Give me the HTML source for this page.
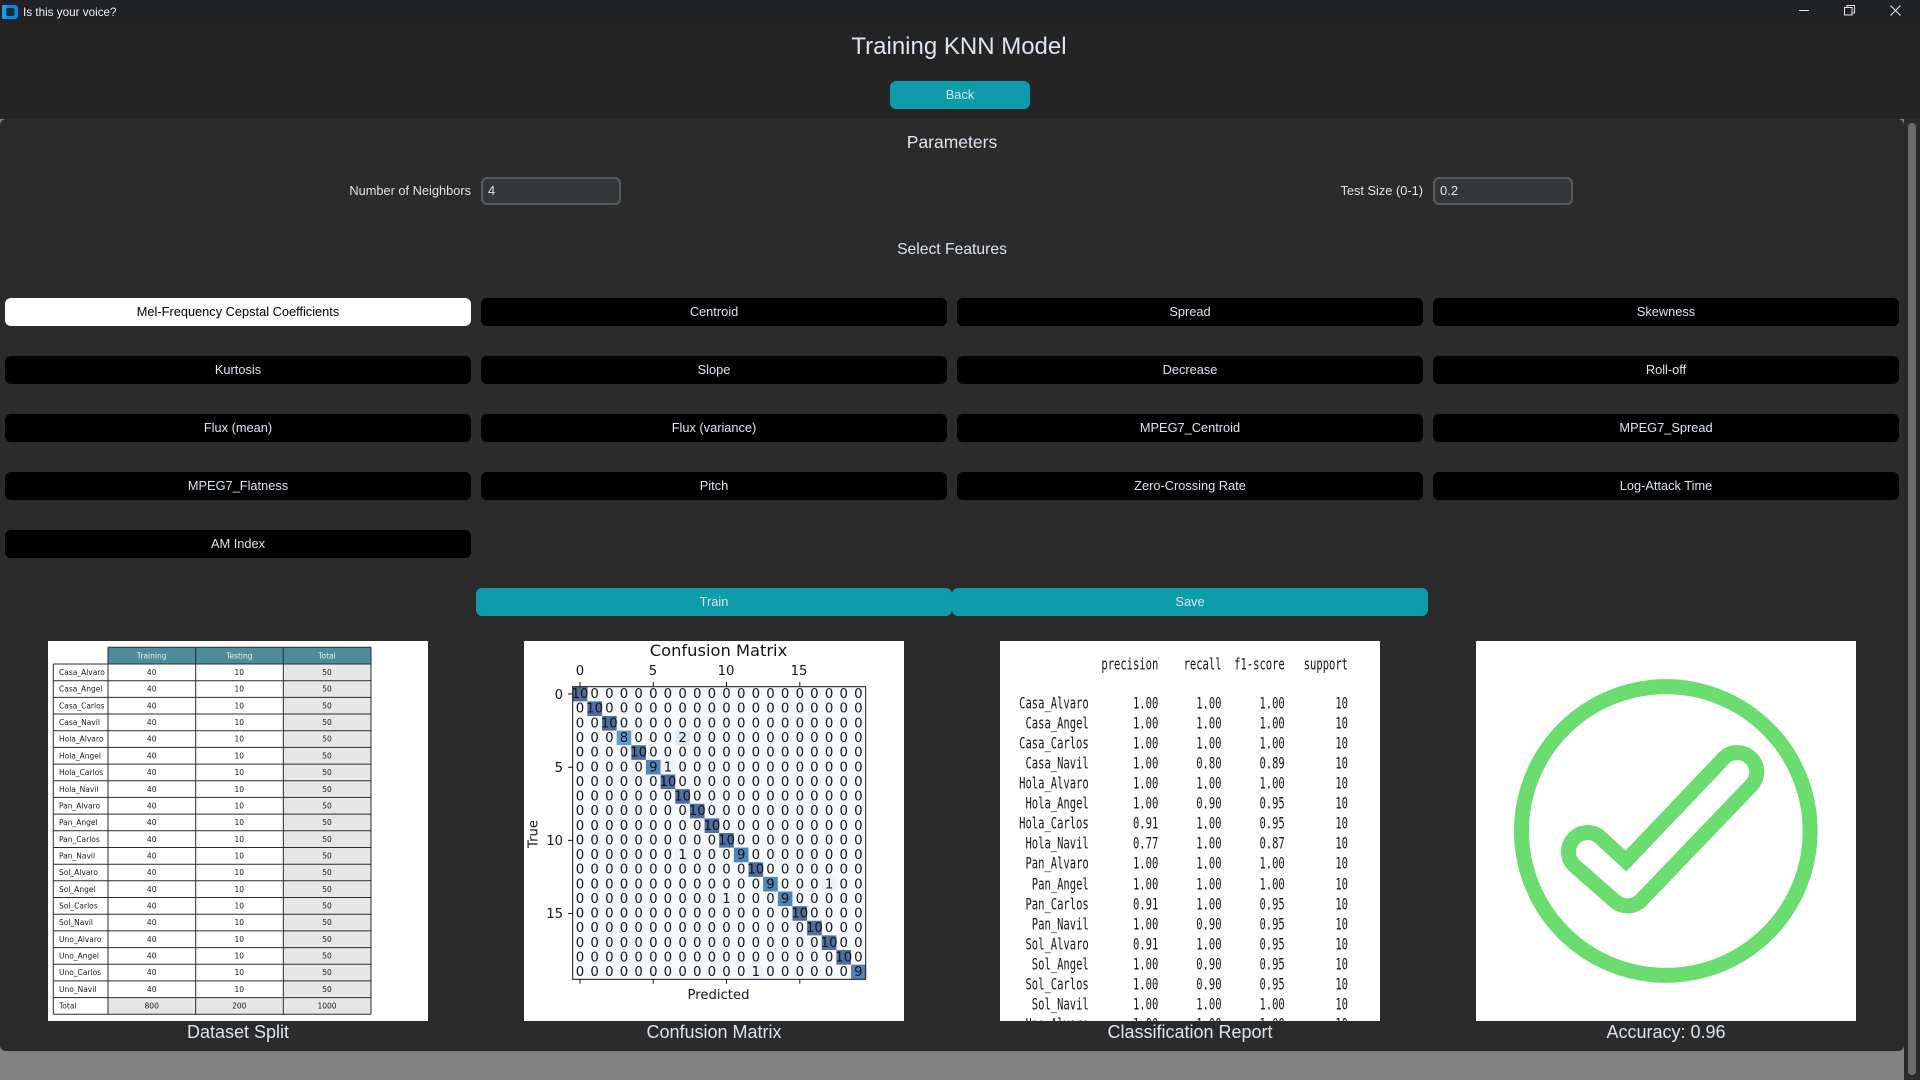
<!DOCTYPE html>
<html><head><meta charset="utf-8"><title>Is this your voice?</title>
<style>
html,body{margin:0;padding:0;width:1920px;height:1080px;overflow:hidden;background:#242424;font-family:"Liberation Sans",Arial,sans-serif;color:#dce4ee}
div{position:absolute;box-sizing:border-box}
.t{white-space:nowrap;text-align:center;line-height:1}
.b{height:28px;width:466px;border-radius:6px;background:#000;color:#dce4ee;font-size:12.8px;display:flex;align-items:center;justify-content:center;white-space:nowrap;padding-bottom:2px}
.a{background:#0e9baa;border-radius:6px;height:28px;font-size:12.8px;display:flex;align-items:center;justify-content:center;color:#dce4ee;padding-bottom:1px}
.i{width:140px;height:28px;background:#343638;border:2px solid #565b5e;border-radius:6px;font-size:13px;line-height:24px;padding-left:5px}
.c{font-size:18px;width:380px;text-align:center;top:1022px;line-height:20px;white-space:nowrap}
svg{position:absolute;left:0;top:0}
.tb text{font-family:"DejaVu Sans",sans-serif;font-size:7.5px;fill:#1a1a1a;text-anchor:middle}
.tb text.l{text-anchor:start}
.tb text.h{fill:#e4eef0}
.cm text{font-family:"DejaVu Sans",sans-serif;font-size:13.3px;fill:#141414;text-anchor:middle}
.cm .n{font-size:13.2px}
.rp text{font-family:"DejaVu Sans Mono",monospace;font-size:15.8px;fill:#161616;text-anchor:end}
</style></head>
<body>
<div style="left:0;top:0;width:1920px;height:23px;background:#202225"></div>
<svg width="1920" height="24" style="z-index:2">
<rect x="2" y="5" width="16" height="14" rx="3" fill="#0a84e6"/>
<rect x="2" y="5" width="5" height="14" rx="2" fill="#0fa0f5"/>
<rect x="6" y="8" width="8.5" height="8" rx="2" fill="#1c2a38"/>
<path d="M1799 10.5h10" stroke="#e8e8e8" stroke-width="1" fill="none"/>
<path d="M1844.5 7.5h7.500v7.500h-7.500zM1847 7.500v-2h7.500v7.500h-2.500" stroke="#e8e8e8" stroke-width="1" fill="none"/>
<path d="M1890.500 5.500l10 10M1900.500 5.500l-10 10" stroke="#e8e8e8" stroke-width="1.100" fill="none"/>
</svg>
<div class="t" style="left:23px;top:6.500px;font-size:11.700px;color:#f0f0f0;z-index:2">Is this your voice?</div>

<div class="t" style="left:760px;top:34.500px;width:398px;font-size:24px">Training KNN Model</div>
<div class="a" style="left:890px;top:81px;width:140px">Back</div>

<div style="left:0;top:119px;width:1920px;height:961px;background:#2b2b2b"></div>
<div style="left:0;top:119px;width:1904px;height:961px;background:#828282"></div>
<div style="left:0;top:119px;width:1904px;height:932px;background:#2b2b2b;border-radius:6px"></div>
<div style="left:1908px;top:123px;width:8px;height:952px;background:#6c6c6c;border-radius:4px"></div>

<div class="t" style="left:752px;top:134px;width:400px;font-size:17.500px">Parameters</div>
<div class="t" style="left:200px;top:185px;width:271px;font-size:12.800px;text-align:right">Number of Neighbors</div>
<div class="i" style="left:481px;top:177px">4</div>
<div class="t" style="left:1150px;top:185px;width:273px;font-size:12.800px;text-align:right">Test Size (0-1)</div>
<div class="i" style="left:1433px;top:177px">0.2</div>
<div class="t" style="left:752px;top:241.500px;width:400px;font-size:15.700px">Select Features</div>

<div class="b" style="left:5px;top:298px;background:#fff;color:#000">Mel-Frequency Cepstal Coefficients</div>
<div class="b" style="left:481px;top:298px">Centroid</div>
<div class="b" style="left:957px;top:298px">Spread</div>
<div class="b" style="left:1433px;top:298px">Skewness</div>
<div class="b" style="left:5px;top:356px">Kurtosis</div>
<div class="b" style="left:481px;top:356px">Slope</div>
<div class="b" style="left:957px;top:356px">Decrease</div>
<div class="b" style="left:1433px;top:356px">Roll-off</div>
<div class="b" style="left:5px;top:414px">Flux (mean)</div>
<div class="b" style="left:481px;top:414px">Flux (variance)</div>
<div class="b" style="left:957px;top:414px">MPEG7_Centroid</div>
<div class="b" style="left:1433px;top:414px">MPEG7_Spread</div>
<div class="b" style="left:5px;top:472px">MPEG7_Flatness</div>
<div class="b" style="left:481px;top:472px">Pitch</div>
<div class="b" style="left:957px;top:472px">Zero-Crossing Rate</div>
<div class="b" style="left:1433px;top:472px">Log-Attack Time</div>
<div class="b" style="left:5px;top:530px">AM Index</div>

<div class="a" style="left:476px;top:588px;width:476px">Train</div>
<div class="a" style="left:952px;top:588px;width:476px">Save</div>

<svg width="1920" height="1080" viewBox="0 0 1920 1080">
<defs><clipPath id="rc"><rect x="1000" y="641" width="380" height="380"/></clipPath></defs>
<rect x="48" y="641" width="380" height="380" fill="#fff"/>
<rect x="524" y="641" width="380" height="380" fill="#fff"/>
<rect x="1000" y="641" width="380" height="380" fill="#fff"/>
<rect x="1476" y="641" width="380" height="380" fill="#fff"/>

<!-- dataset table -->
<g class="tb" style="filter:blur(.3px)">
<rect x="108" y="647.300" width="263" height="16.700" fill="#4f8c9a"/>
<rect x="283.300" y="664" width="87.700" height="350.300" fill="#e6e6e6"/>
<rect x="108" y="997.600" width="263" height="16.700" fill="#e6e6e6"/>
<path fill="none" stroke="#2a2a2a" stroke-width="1" d="M108 647.300H371M53.300 664H371M53.300 680.700H371M53.300 697.400H371M53.300 714H371M53.300 730.700H371M53.300 747.400H371M53.300 764.100H371M53.300 780.800H371M53.300 797.400H371M53.300 814.100H371M53.300 830.800H371M53.300 847.500H371M53.300 864.200H371M53.300 880.800H371M53.300 897.500H371M53.300 914.200H371M53.300 930.900H371M53.300 947.600H371M53.300 964.200H371M53.300 980.900H371M53.300 997.600H371M53.300 1014.300H371M53.300 664V1014.300M108 647.300V1014.300M195.700 647.300V1014.300M283.300 647.300V1014.300M371 647.300V1014.300"/>
<text class="h" y="658.300" x="151.700">Training</text><text class="h" y="658.300" x="239.300">Testing</text><text class="h" y="658.300" x="327">Total</text>
<text class="l" x="59" y="675">Casa_Alvaro</text><text y="675"><tspan x="151.700">40</tspan><tspan x="239.300">10</tspan><tspan x="327">50</tspan></text>
<text class="l" x="59" y="691.700">Casa_Angel</text><text y="691.700"><tspan x="151.700">40</tspan><tspan x="239.300">10</tspan><tspan x="327">50</tspan></text>
<text class="l" x="59" y="708.400">Casa_Carlos</text><text y="708.400"><tspan x="151.700">40</tspan><tspan x="239.300">10</tspan><tspan x="327">50</tspan></text>
<text class="l" x="59" y="725">Casa_Navil</text><text y="725"><tspan x="151.700">40</tspan><tspan x="239.300">10</tspan><tspan x="327">50</tspan></text>
<text class="l" x="59" y="741.700">Hola_Alvaro</text><text y="741.700"><tspan x="151.700">40</tspan><tspan x="239.300">10</tspan><tspan x="327">50</tspan></text>
<text class="l" x="59" y="758.400">Hola_Angel</text><text y="758.400"><tspan x="151.700">40</tspan><tspan x="239.300">10</tspan><tspan x="327">50</tspan></text>
<text class="l" x="59" y="775.100">Hola_Carlos</text><text y="775.100"><tspan x="151.700">40</tspan><tspan x="239.300">10</tspan><tspan x="327">50</tspan></text>
<text class="l" x="59" y="791.800">Hola_Navil</text><text y="791.800"><tspan x="151.700">40</tspan><tspan x="239.300">10</tspan><tspan x="327">50</tspan></text>
<text class="l" x="59" y="808.400">Pan_Alvaro</text><text y="808.400"><tspan x="151.700">40</tspan><tspan x="239.300">10</tspan><tspan x="327">50</tspan></text>
<text class="l" x="59" y="825.100">Pan_Angel</text><text y="825.100"><tspan x="151.700">40</tspan><tspan x="239.300">10</tspan><tspan x="327">50</tspan></text>
<text class="l" x="59" y="841.800">Pan_Carlos</text><text y="841.800"><tspan x="151.700">40</tspan><tspan x="239.300">10</tspan><tspan x="327">50</tspan></text>
<text class="l" x="59" y="858.500">Pan_Navil</text><text y="858.500"><tspan x="151.700">40</tspan><tspan x="239.300">10</tspan><tspan x="327">50</tspan></text>
<text class="l" x="59" y="875.200">Sol_Alvaro</text><text y="875.200"><tspan x="151.700">40</tspan><tspan x="239.300">10</tspan><tspan x="327">50</tspan></text>
<text class="l" x="59" y="891.800">Sol_Angel</text><text y="891.800"><tspan x="151.700">40</tspan><tspan x="239.300">10</tspan><tspan x="327">50</tspan></text>
<text class="l" x="59" y="908.500">Sol_Carlos</text><text y="908.500"><tspan x="151.700">40</tspan><tspan x="239.300">10</tspan><tspan x="327">50</tspan></text>
<text class="l" x="59" y="925.200">Sol_Navil</text><text y="925.200"><tspan x="151.700">40</tspan><tspan x="239.300">10</tspan><tspan x="327">50</tspan></text>
<text class="l" x="59" y="941.900">Uno_Alvaro</text><text y="941.900"><tspan x="151.700">40</tspan><tspan x="239.300">10</tspan><tspan x="327">50</tspan></text>
<text class="l" x="59" y="958.600">Uno_Angel</text><text y="958.600"><tspan x="151.700">40</tspan><tspan x="239.300">10</tspan><tspan x="327">50</tspan></text>
<text class="l" x="59" y="975.200">Uno_Carlos</text><text y="975.200"><tspan x="151.700">40</tspan><tspan x="239.300">10</tspan><tspan x="327">50</tspan></text>
<text class="l" x="59" y="991.900">Uno_Navil</text><text y="991.900"><tspan x="151.700">40</tspan><tspan x="239.300">10</tspan><tspan x="327">50</tspan></text>
<text class="l" x="59" y="1008.600">Total</text><text y="1008.600"><tspan x="151.700">800</tspan><tspan x="239.300">200</tspan><tspan x="327">1000</tspan></text>
</g>

<!-- confusion matrix -->
<g class="cm" style="filter:blur(.25px)">
<rect x="572.700" y="686.700" width="293" height="292.600" fill="#f7fbff"/>
<path fill="#4f6e9f" d="M572.700 686.700h14.650v14.630h-14.650zM587.350 701.330h14.650v14.630h-14.650zM602 715.960h14.650v14.630h-14.650zM631.300 745.220h14.650v14.630h-14.650zM660.600 774.480h14.650v14.630h-14.650zM675.250 789.110h14.650v14.630h-14.650zM689.900 803.740h14.650v14.630h-14.650zM704.550 818.370h14.650v14.630h-14.650zM719.200 833h14.650v14.630h-14.650zM748.500 862.260h14.650v14.630h-14.650zM792.450 906.150h14.650v14.630h-14.650zM807.100 920.780h14.650v14.630h-14.650zM821.750 935.410h14.650v14.630h-14.650zM836.400 950.040h14.650v14.630h-14.650z"/>
<path fill="#4f84b8" d="M645.950 759.850h14.650v14.630h-14.650zM733.850 847.630h14.650v14.630h-14.650zM763.150 876.890h14.650v14.630h-14.650zM777.800 891.520h14.650v14.630h-14.650zM851.050 964.670h14.650v14.630h-14.650z"/>
<path fill="#5f9dd0" d="M616.650 730.590h14.650v14.630h-14.650z"/>
<path fill="#deebf7" d="M675.250 730.590h14.650v14.630h-14.650z"/>
<path fill="#eef4fb" d="M660.600 759.850h14.650v14.630h-14.650zM675.250 847.630h14.650v14.630h-14.650zM821.750 876.890h14.650v14.630h-14.650zM719.200 891.520h14.650v14.630h-14.650zM748.500 964.670h14.650v14.630h-14.650z"/>
<rect x="572.700" y="686.700" width="293" height="292.600" fill="none" stroke="#111" stroke-width="1"/>
<path stroke="#111" stroke-width="1" fill="none" d="M580 682v4.700M653.300 682v4.700M726.500 682v4.700M799.800 682v4.700M580 979.300v4.500M653.300 979.300v4.500M726.500 979.300v4.500M799.800 979.300v4.500M568 694h4.700M568 767.200h4.700M568 840.400h4.700M568 913.500h4.700"/>
<text x="718.500" y="656" style="font-size:16.300px">Confusion Matrix</text>
<text class="n" x="580" y="675">0</text><text class="n" x="653" y="675">5</text><text class="n" x="726" y="675">10</text><text class="n" x="799" y="675">15</text>
<text class="n" style="text-anchor:end" x="563" y="699">0</text><text class="n" style="text-anchor:end" x="563" y="772">5</text><text class="n" style="text-anchor:end" x="563" y="845">10</text><text class="n" style="text-anchor:end" x="563" y="918">15</text>
<text class="n" transform="translate(537.500,834) rotate(-90)">True</text>
<text class="n" x="718.500" y="999">Predicted</text>
<g transform="translate(0,-.8)">
<text xml:space="preserve" y="698.900" x="580 594.6 609.3 624 638.6 653.3 667.9 682.6 697.2 711.9 726.5 741.2 755.8 770.5 785.1 799.8 814.4 829.1 843.7 858.4"> 0000000000000000000</text>
<text xml:space="preserve" y="713.500" x="580 594.6 609.3 624 638.6 653.3 667.9 682.6 697.2 711.9 726.5 741.2 755.8 770.5 785.1 799.8 814.4 829.1 843.7 858.4">0 000000000000000000</text>
<text xml:space="preserve" y="728.200" x="580 594.6 609.3 624 638.6 653.3 667.9 682.6 697.2 711.9 726.5 741.2 755.8 770.5 785.1 799.8 814.4 829.1 843.7 858.4">00 00000000000000000</text>
<text xml:space="preserve" y="742.800" x="580 594.6 609.3 624 638.6 653.3 667.9 682.6 697.2 711.9 726.5 741.2 755.8 770.5 785.1 799.8 814.4 829.1 843.7 858.4">00080002000000000000</text>
<text xml:space="preserve" y="757.400" x="580 594.6 609.3 624 638.6 653.3 667.9 682.6 697.2 711.9 726.5 741.2 755.8 770.5 785.1 799.8 814.4 829.1 843.7 858.4">0000 000000000000000</text>
<text xml:space="preserve" y="772.100" x="580 594.6 609.3 624 638.6 653.3 667.9 682.6 697.2 711.9 726.5 741.2 755.8 770.5 785.1 799.8 814.4 829.1 843.7 858.4">00000910000000000000</text>
<text xml:space="preserve" y="786.700" x="580 594.6 609.3 624 638.6 653.3 667.9 682.6 697.2 711.9 726.5 741.2 755.8 770.5 785.1 799.8 814.4 829.1 843.7 858.4">000000 0000000000000</text>
<text xml:space="preserve" y="801.300" x="580 594.6 609.3 624 638.6 653.3 667.9 682.6 697.2 711.9 726.5 741.2 755.8 770.5 785.1 799.8 814.4 829.1 843.7 858.4">0000000 000000000000</text>
<text xml:space="preserve" y="815.900" x="580 594.6 609.3 624 638.6 653.3 667.9 682.6 697.2 711.9 726.5 741.2 755.8 770.5 785.1 799.8 814.4 829.1 843.7 858.4">00000000 00000000000</text>
<text xml:space="preserve" y="830.600" x="580 594.6 609.3 624 638.6 653.3 667.9 682.6 697.2 711.9 726.5 741.2 755.8 770.5 785.1 799.8 814.4 829.1 843.7 858.4">000000000 0000000000</text>
<text xml:space="preserve" y="845.200" x="580 594.6 609.3 624 638.6 653.3 667.9 682.6 697.2 711.9 726.5 741.2 755.8 770.5 785.1 799.8 814.4 829.1 843.7 858.4">0000000000 000000000</text>
<text xml:space="preserve" y="859.800" x="580 594.6 609.3 624 638.6 653.3 667.9 682.6 697.2 711.9 726.5 741.2 755.8 770.5 785.1 799.8 814.4 829.1 843.7 858.4">00000001000900000000</text>
<text xml:space="preserve" y="874.500" x="580 594.6 609.3 624 638.6 653.3 667.9 682.6 697.2 711.9 726.5 741.2 755.8 770.5 785.1 799.8 814.4 829.1 843.7 858.4">000000000000 0000000</text>
<text xml:space="preserve" y="889.100" x="580 594.6 609.3 624 638.6 653.3 667.9 682.6 697.2 711.9 726.5 741.2 755.8 770.5 785.1 799.8 814.4 829.1 843.7 858.4">00000000000009000100</text>
<text xml:space="preserve" y="903.700" x="580 594.6 609.3 624 638.6 653.3 667.9 682.6 697.2 711.9 726.5 741.2 755.8 770.5 785.1 799.8 814.4 829.1 843.7 858.4">00000000001000900000</text>
<text xml:space="preserve" y="918.400" x="580 594.6 609.3 624 638.6 653.3 667.9 682.6 697.2 711.9 726.5 741.2 755.8 770.5 785.1 799.8 814.4 829.1 843.7 858.4">000000000000000 0000</text>
<text xml:space="preserve" y="933" x="580 594.6 609.3 624 638.6 653.3 667.9 682.6 697.2 711.9 726.5 741.2 755.8 770.5 785.1 799.8 814.4 829.1 843.7 858.4">0000000000000000 000</text>
<text xml:space="preserve" y="947.600" x="580 594.6 609.3 624 638.6 653.3 667.9 682.6 697.2 711.9 726.5 741.2 755.8 770.5 785.1 799.8 814.4 829.1 843.7 858.4">00000000000000000 00</text>
<text xml:space="preserve" y="962.300" x="580 594.6 609.3 624 638.6 653.3 667.9 682.6 697.2 711.9 726.5 741.2 755.8 770.5 785.1 799.8 814.4 829.1 843.7 858.4">000000000000000000 0</text>
<text xml:space="preserve" y="976.900" x="580 594.6 609.3 624 638.6 653.3 667.9 682.6 697.2 711.9 726.5 741.2 755.8 770.5 785.1 799.8 814.4 829.1 843.7 858.4">00000000000010000009</text>
<text x="580" y="698.900">10</text><text x="594.600" y="713.500">10</text><text x="609.300" y="728.200">10</text><text x="638.600" y="757.400">10</text><text x="667.900" y="786.700">10</text><text x="682.600" y="801.300">10</text><text x="697.200" y="815.900">10</text><text x="711.900" y="830.600">10</text><text x="726.500" y="845.200">10</text><text x="755.800" y="874.500">10</text><text x="799.800" y="918.400">10</text><text x="814.400" y="933">10</text><text x="829.100" y="947.600">10</text><text x="843.700" y="962.300">10</text>
</g>
</g>

<!-- classification report -->
<g class="rp" clip-path="url(#rc)"><g style="filter:blur(.15px)" transform="translate(1348,0) scale(.6655,1)">
<text xml:space="preserve" y="669.500" x="0">  precision    recall  f1-score   support</text>
<text xml:space="preserve" y="708.500" x="0">Casa_Alvaro       1.00      1.00      1.00        10</text>
<text xml:space="preserve" y="728.500" x="0">Casa_Angel       1.00      1.00      1.00        10</text>
<text xml:space="preserve" y="748.500" x="0">Casa_Carlos       1.00      1.00      1.00        10</text>
<text xml:space="preserve" y="768.500" x="0">Casa_Navil       1.00      0.80      0.89        10</text>
<text xml:space="preserve" y="788.500" x="0">Hola_Alvaro       1.00      1.00      1.00        10</text>
<text xml:space="preserve" y="808.500" x="0">Hola_Angel       1.00      0.90      0.95        10</text>
<text xml:space="preserve" y="828.500" x="0">Hola_Carlos       0.91      1.00      0.95        10</text>
<text xml:space="preserve" y="848.500" x="0">Hola_Navil       0.77      1.00      0.87        10</text>
<text xml:space="preserve" y="868.500" x="0">Pan_Alvaro       1.00      1.00      1.00        10</text>
<text xml:space="preserve" y="889.500" x="0">Pan_Angel       1.00      1.00      1.00        10</text>
<text xml:space="preserve" y="909.500" x="0">Pan_Carlos       0.91      1.00      0.95        10</text>
<text xml:space="preserve" y="929.500" x="0">Pan_Navil       1.00      0.90      0.95        10</text>
<text xml:space="preserve" y="949.500" x="0">Sol_Alvaro       0.91      1.00      0.95        10</text>
<text xml:space="preserve" y="969.500" x="0">Sol_Angel       1.00      0.90      0.95        10</text>
<text xml:space="preserve" y="989.500" x="0">Sol_Carlos       1.00      0.90      0.95        10</text>
<text xml:space="preserve" y="1009.500" x="0">Sol_Navil       1.00      1.00      1.00        10</text>
<text xml:space="preserve" y="1029.500" x="0">Uno_Alvaro       1.00      1.00      1.00        10</text>
</g></g>

<!-- accuracy check -->
<g transform="translate(1440,630) scale(.33333)" fill="none" stroke="#6bdc70" stroke-width="45">
<circle cx="677.500" cy="603" r="433"/>
<path stroke-linejoin="miter" d="M558 693L852 384A58 58 0 0 1 934 466L603 811A58 58 0 0 1 524 813L399 703A58 58 0 0 1 475 617Z"/>
</g>
</svg>

<div class="c" style="left:48px">Dataset Split</div>
<div class="c" style="left:524px">Confusion Matrix</div>
<div class="c" style="left:1000px">Classification Report</div>
<div class="c" style="left:1476px">Accuracy: 0.96</div>
</body></html>
